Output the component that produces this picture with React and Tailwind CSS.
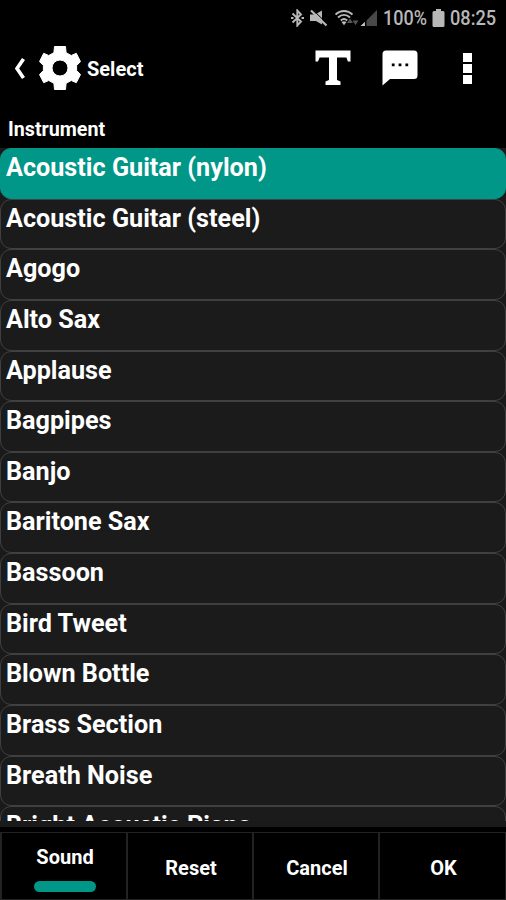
import React, { useState } from "react";

const instruments = [
  "Acoustic Guitar (nylon)",
  "Acoustic Guitar (steel)",
  "Agogo",
  "Alto Sax",
  "Applause",
  "Bagpipes",
  "Banjo",
  "Baritone Sax",
  "Bassoon",
  "Bird Tweet",
  "Blown Bottle",
  "Brass Section",
  "Breath Noise",
  "Bright Acoustic Piano",
];

const StatusBar = () => (
  <div className="h-9 shrink-0 flex items-center justify-end pr-[10px] text-[#b8b8b8]">
    {/* Bluetooth */}
    <svg className="w-[13px] h-[18px] -ml-[2px]" viewBox="0 0 13 18" fill="none" stroke="currentColor" strokeWidth="1.9">
      <path d="M1.500 4.500l8.500 8-3.700 4V1.500L10 5.500 1.500 13.500" />
      <path d="M0 9h2.500M10.500 9H13" strokeWidth="2" />
    </svg>
    {/* Muted speaker */}
    <svg className="w-[18px] h-[18px] ml-[6px]" viewBox="0 0 18 18" fill="currentColor">
      <path d="M0 5.500h5L12 1.500v14L6 12H0z" />
      <path d="M2.500 .5L18 15.500" stroke="#000" strokeWidth="1" />
      <path d="M1 1.500l15.500 15" stroke="currentColor" strokeWidth="2.200" />
    </svg>
    {/* Wifi */}
    <svg className="w-[25px] h-[18px] ml-[7px]" viewBox="0 0 25 18" fill="none" stroke="currentColor" strokeWidth="1.900">
      <path d="M.5 5.500c5-4.700 12-4.700 17 0M3 8.500c3.600-3.300 8.400-3.300 12 0M5.800 11.500c2-1.800 4.400-1.800 6.400 0" />
      <path d="M6.500 13L9 16.300l2.500-3.300c-1.500-1-3.500-1-5 0z" fill="currentColor" stroke="none" />
      <path d="M12 14l3-4.500 3 4.500zM17.500 11.500l3 4.500 3-4.500z" fill="#555" stroke="none" />
    </svg>
    {/* Signal */}
    <svg className="w-[18px] h-[18px]" viewBox="0 0 18 18">
      <path d="M17 1v16H1z" fill="#484848" />
      <path d="M5 12.700V17H.5z" fill="#c4c4c4" />
      <path d="M5.700 10v8" stroke="#000" strokeWidth="1.500" />
    </svg>
    <span className="ml-[5px] w-[45px] text-[20px] leading-none font-medium">
      <span className="inline-block origin-left scale-x-[0.9] whitespace-nowrap">100%</span>
    </span>
    {/* Battery */}
    <svg className="w-[13px] h-[18px] ml-[4px]" viewBox="0 0 13 18" fill="currentColor">
      <path d="M4 0h5v2h2q1.500 0 1.500 1.500v13q0 1.500-1.500 1.500H2Q.5 18 .5 16.500v-13Q.5 2 2 2h2z" />
    </svg>
    <span className="ml-[5px] w-[46px] text-[20px] leading-none font-medium">
      <span className="inline-block origin-left scale-x-[0.91] whitespace-nowrap">08:25</span>
    </span>
  </div>
);

const Header = () => (
  <header className="h-[66px] shrink-0 flex items-center">
    <button className="ml-[13px] -mt-[1px]" aria-label="Back">
      <svg className="w-3 h-[21px]" viewBox="0 0 12 21" fill="none" stroke="white" strokeWidth="3.6">
        <path d="M10.500 1L4 10.500l6.500 9.500" />
      </svg>
    </button>
    <svg
      className="w-[42px] h-[44px] ml-[14px] -mt-[2px]"
      viewBox="0 0 42 44"
      fill="white"
      fillRule="evenodd"
      stroke="white"
      strokeLinejoin="round"
    >
      <path d="M15.500 .5h11l.6 6.200 5.200 2.800 5-2.200L41.500 15.600 37.600 19.500v5L41.500 28.500 37.300 36.700l-5-2.200-5.200 2.800-.6 6.200h-11l-.6-6.200-5.200-2.800-5 2.200L.5 28.500l3.900-4v-5L.5 15.600 4.700 7.300l5 2.200 5.200-2.800zM21 14a8 8 0 1 0 0 16 8 8 0 0 0 0-16z" />
    </svg>
    <h1 className="ml-[6px] text-[20px] font-bold">Select</h1>
    <div className="ml-auto flex items-center pr-[34px] -mt-[2px]">
      <svg className="w-[36px] h-[36px]" viewBox="0 0 36 36" fill="white">
        <path d="M.500 .500h35v11h-2.600l-1.500-4H22v22.500l3.500 1.500v3.500h-15v-3.500l3.500-1.500V7.500H4.600L3 11.500H.500z" />
      </svg>
      <svg className="w-[36px] h-[36px] ml-[31px]" viewBox="0 0 36 36" fill="white">
        <path d="M4 .5h28q3.500 0 3.500 3.500v21.500q0 3.500-3.500 3.500H8L.500 35.500v-31.500Q.500 .5 4 .5z" />
        <path d="M9.800 13.500h2.800v2.800H9.800zM16.600 13.500h2.800v2.800h-2.800zM23.400 13.500h2.800v2.800h-2.800z" fill="black" />
      </svg>
      <div className="ml-[45px] flex flex-col gap-[2px]">
        <span className="w-[9px] h-[9px] bg-white"></span>
        <span className="w-[9px] h-[9px] bg-white"></span>
        <span className="w-[9px] h-[9px] bg-white"></span>
      </div>
    </div>
  </header>
);

const tabs = ["Sound", "Reset", "Cancel", "OK"];

const App = () => {
  const [selected, setSelected] = useState(0);
  const [activeTab, setActiveTab] = useState("Sound");

  return (
    <div className="w-full h-screen bg-black text-white overflow-hidden flex flex-col font-['Roboto',sans-serif]">
      <StatusBar />
      <Header />
      <h2 className="h-[46px] shrink-0 pl-2 pt-[14px] text-[19.7px] leading-[28px] font-bold">Instrument</h2>

      <div className="h-[679px] shrink-0 overflow-hidden bg-[#1a1a1a]">
        <ul className="h-[673px] overflow-hidden">
          {instruments.map((name, index) => (
            <li
              key={name}
              onClick={() => setSelected(index)}
              className={`h-[50.65px] rounded-[11px] border pl-[5px] text-[25.2px] leading-[38px] font-bold whitespace-nowrap ${
                index === selected ? "bg-[#009688] border-[#009688]" : "bg-[#1b1b1b] border-[#404040]"
              }`}
            >
              {name}
            </li>
          ))}
        </ul>
      </div>

      <footer className="mt-[5px] h-[68px] shrink-0 grid grid-cols-4 border-t border-b border-l-2 border-[#222]">
        {tabs.map((tab) => (
          <button
            key={tab}
            onClick={() => setActiveTab(tab)}
            className="flex flex-col items-center justify-center gap-[10px] pt-[3px] pl-[2px] border-r-2 last:border-r border-[#222] text-[20px] leading-[28px] font-bold"
          >
            {tab}
            {tab === activeTab && <span className="w-[62px] h-[11px] rounded-full bg-[#009688]"></span>}
          </button>
        ))}
      </footer>
    </div>
  );
};

export default App;
